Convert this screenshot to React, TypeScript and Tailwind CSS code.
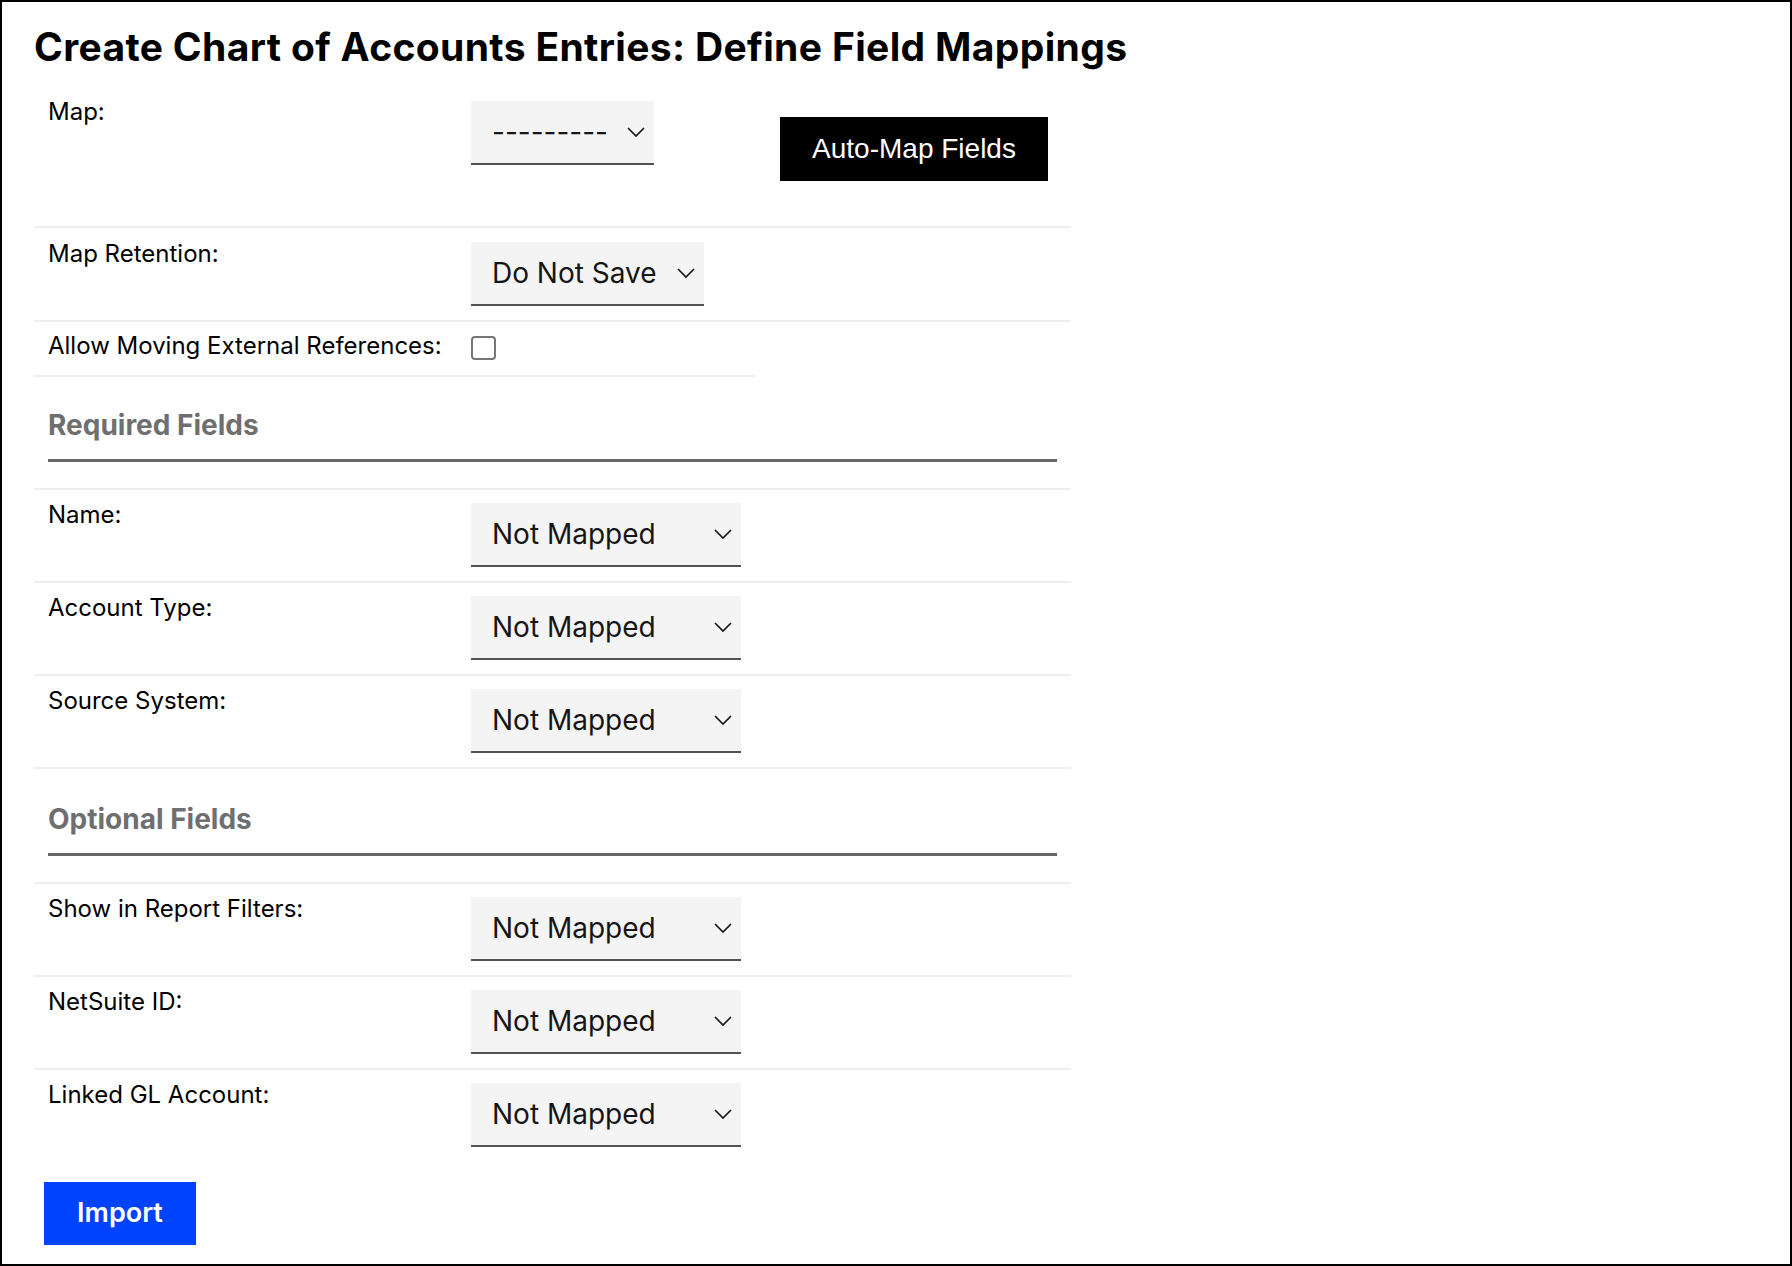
import React from "react";

const requiredFields = ["Name:", "Account Type:", "Source System:"];
const optionalFields = ["Show in Report Filters:", "NetSuite ID:", "Linked GL Account:"];

function Chevron() {
  return (
    <svg width="18" height="10" viewBox="0 0 18 10" fill="none" className="shrink-0">
      <polyline points="1,1 9,9 17,1" stroke="#161616" strokeWidth="1.7" />
    </svg>
  );
}

function Select({ value, width }: { value: string; width: string }) {
  return (
    <div
      className={`flex h-[64px] items-center justify-between border-b-2 border-[#525252] bg-[#f4f4f4] pl-[21px] pr-[9px] text-[28px] text-[#161616] ${width}`}
    >
      <span>{value}</span>
      <Chevron />
    </div>
  );
}

function FieldRow({ label, last }: { label: string; last?: boolean }) {
  return (
    <div className={`grid grid-cols-[437px_1fr] border-t-2 border-[#eeeeee] pt-[13px] ${last ? "pb-0" : "pb-[14px]"}`}>
      <div className="pl-[14px] text-[24px] leading-[24px]">{label}</div>
      <Select value="Not Mapped" width="w-[270px]" />
    </div>
  );
}

function SectionHeading({ title, top }: { title: string; top: string }) {
  return (
    <div className={top}>
      <h2 className="pl-[14px] text-[28px] font-bold leading-[32px] text-[#6f6f6f]">{title}</h2>
      <div className="ml-[14px] mt-[18px] h-[3px] w-[1009px] bg-[#666666]" />
      <div className="h-[26px]" />
    </div>
  );
}

export default function App() {
  return (
    <div className="h-[1266px] border-2 border-black bg-white font-['Inter',sans-serif] text-black">
      <div className="pl-[32px] pt-[22px]">
        <h1 className="text-[39px] font-bold leading-[46px] tracking-[0.35px]">
          Create Chart of Accounts Entries: Define Field Mappings
        </h1>

        <div className="mt-[27px] w-[1037px]">
          {/* Map */}
          <div className="grid grid-cols-[437px_1fr] pb-[45px]">
            <div className="pl-[14px] pt-[3px] text-[24px] leading-[24px]">Map:</div>
            <div className="flex items-start">
              <div className="mt-[4px]">
                <Select value="---------" width="w-[183px]" />
              </div>
              <button className="ml-[126px] mt-[20px] h-[64px] w-[268px] bg-black font-['Liberation_Sans',Arial,sans-serif] text-[28px] text-white">
                Auto-Map Fields
              </button>
            </div>
          </div>

          {/* Map Retention */}
          <div className="grid grid-cols-[437px_1fr] border-t-2 border-[#eeeeee] pb-[14px] pt-[14px]">
            <div className="pl-[14px] text-[24px] leading-[24px]">Map Retention:</div>
            <Select value="Do Not Save" width="w-[233px]" />
          </div>

          {/* Allow moving */}
          <div className="border-t-2 border-[#eeeeee]">
            <div className="grid w-[721px] grid-cols-[437px_1fr] border-b-2 border-[#eeeeee] pb-[15px] pt-[9px]">
              <div className="pl-[14px] pt-[3px] text-[24px] leading-[24px]">Allow Moving External References:</div>
              <div>
                <div className="mt-[5px] h-[24px] w-[25px] rounded-[4px] border-2 border-[#767676] bg-white" />
              </div>
            </div>
          </div>

          <SectionHeading title="Required Fields" top="pt-[32px]" />
          {requiredFields.map((f) => (
            <FieldRow key={f} label={f} />
          ))}
          <div className="border-t-2 border-[#eeeeee]" />

          <SectionHeading title="Optional Fields" top="pt-[34px]" />
          {optionalFields.map((f, i) => (
            <FieldRow key={f} label={f} last={i === optionalFields.length - 1} />
          ))}
        </div>

        <button className="ml-[10px] mt-[35px] h-[63px] w-[152px] bg-[#0043ff] text-[27px] font-semibold text-white">
          Import
        </button>
      </div>
    </div>
  );
}
